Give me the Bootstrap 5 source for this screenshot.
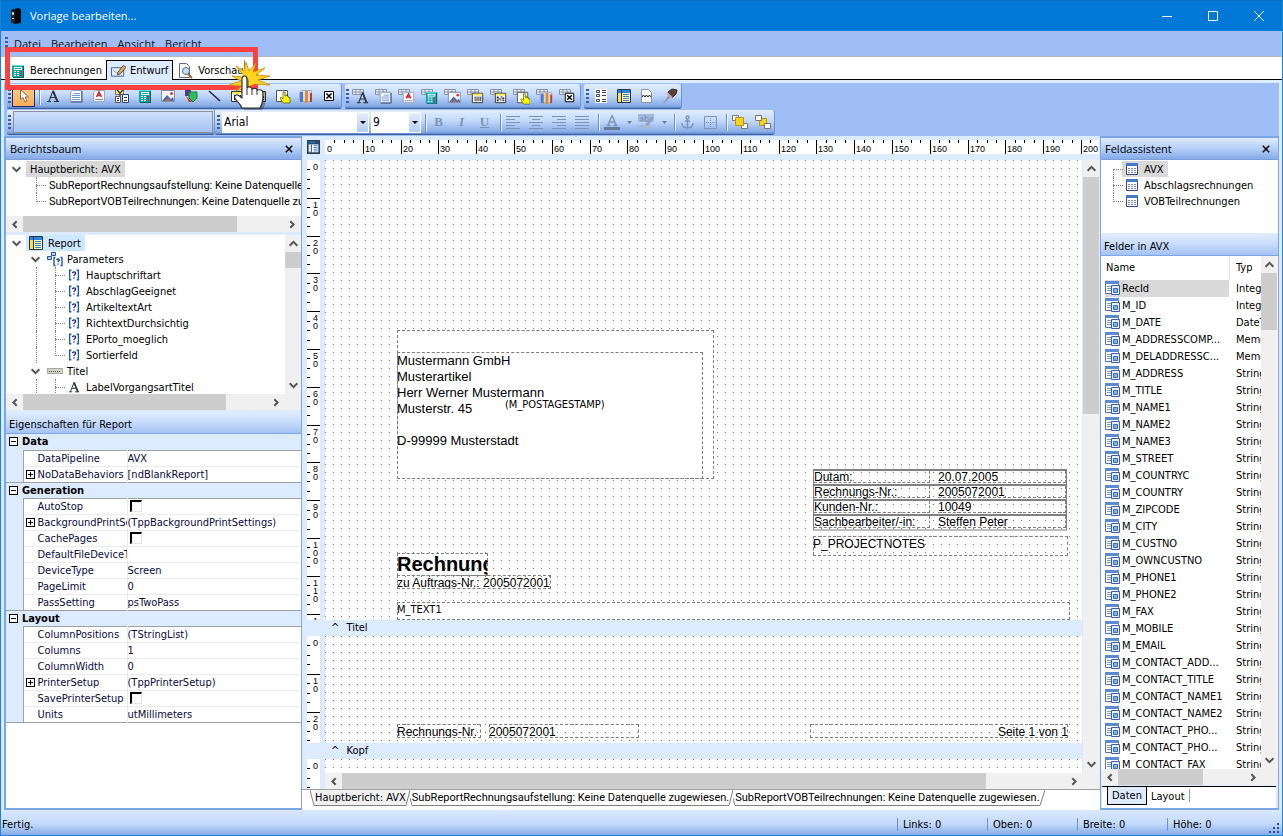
<!DOCTYPE html>
<html lang="de">
<head>
<meta charset="utf-8">
<meta name="viewport" content="width=device-width, initial-scale=1">
<title>Vorlage bearbeiten...</title>
<link href="https://cdn.jsdelivr.net/npm/bootstrap@5.3.0/dist/css/bootstrap.min.css" rel="stylesheet">
<style>
:root{--pale:#ddebff;--mid:#9ebef5;--edge:#7ca6e8;--ui:"DejaVu Sans Condensed","DejaVu Sans",sans-serif;--seg:"Open Sans","Noto Sans",sans-serif;--doc:"Liberation Sans",Arial,sans-serif;--long:Roboto,"DejaVu Sans Condensed",sans-serif}
body{font:11px/16px var(--ui);color:#000;background:var(--pale)}
button{font:inherit;color:inherit;background:none;border:0;padding:0}
svg{display:block;flex:none}
.nw{white-space:nowrap}
.window{border:1px solid #1883d7;border-top-color:#0a6fc0}
.titlebar{background:#0078d7;color:#fff;height:30px;font:11px/16px var(--seg);padding-left:9px}
.titlebar button{width:46px;height:30px;display:flex;align-items:center;justify-content:center}
.menubar{background:var(--mid);height:25px;font:11px/24px var(--seg);gap:10px}
.menubar a{color:#111;text-decoration:none}
.menubar .grip{margin-right:-4px}
.grip{width:3px;height:14px;background:repeating-linear-gradient(#3a5fa8 0 2px,transparent 2px 4px);flex:none}
.modes{background:#fff;border-top:1px solid #b8b8b8;border-bottom:1px solid #000;height:24px;position:relative;padding-top:3px;padding-left:9px}
.modes button{height:20px;line-height:20px;display:flex;align-items:center;gap:4px;position:relative;z-index:1;padding-top:2px}
.modes button.on{background:var(--pale);border:1px solid #000;border-bottom:0;padding-top:1px}
.modes .stop{width:1px;height:13px;background:#888}
.callout{position:absolute;left:4px;top:-10px;width:253px;height:43px;border:5px solid #ff4141;z-index:5;pointer-events:none}
.pointer{position:absolute;left:223px;top:2px;z-index:6;pointer-events:none}
.tools{background:var(--mid);margin:3px 3px 0;padding:1px 2px 1px 3px}
.bars+.bars{margin-top:1px}
.strip{display:flex;align-items:center;height:25px;background:linear-gradient(#e1edff,#c3d9fb 45%,#86abe6 92%,#5c82c4);border-radius:2px 3px 3px 2px;border-bottom:1px solid #40639f;border-right:1px solid #6f95d6;padding-left:1px;margin-right:3px}
.strip.roomy{padding-right:1px}
.strip.wide{padding-left:2px}
.strip .tb{width:23px;height:22px;display:flex;align-items:center;justify-content:center;flex:none}
.strip .tb.on{background:linear-gradient(#ffce8a,#ffad55);border:1px solid #1a2a80;margin-left:1px}
.strip .tb.dd{width:12px}
.strip .sep{width:2px;height:17px;background:linear-gradient(90deg,#6a8ccb 1px,#f1f6ff 1px);margin-left:4px}
.dim{color:#7d93b8}
.fs{font:700 13px/16px "Liberation Serif",serif}
.strip select{appearance:none;border:0;border-radius:0;height:21px;padding:0 14px 0 2px;font:12px/20px var(--ui);color:#000;background:#fff}
.pick{position:relative;display:flex;margin-left:2px}
.pick::after{content:"";position:absolute;right:1px;top:1px;bottom:1px;width:11px;background:linear-gradient(#e3eeff,#b4cdf5);pointer-events:none}
.pick::before{content:"";position:absolute;z-index:1;right:3px;top:9px;border:3px solid transparent;border-top-color:#000;border-bottom:0;pointer-events:none}
.fam{width:147px}.siz{width:50px}
.inset{background:linear-gradient(#cfe0fb,#a3c2f2);border:1px solid #8a8f98;width:200px;height:22px;margin:0 1px 0 2px}
.work-area{min-height:0;padding:0 3px}
.side{border:2px solid var(--edge);border-right-width:1px;min-height:0}
.side.left{width:298px}.side.right{width:179px;border-left-width:1px}
.cap{font:11px/21px var(--seg);height:22px;padding:0 4px;background:linear-gradient(#dfecff,#b5cff8 50%,#86abe8);border-bottom:1px solid #7b9fdb}
.subcap{height:20px;line-height:21px;padding:0 3px;background:linear-gradient(#dbe9ff,#c6dbfb 45%,#a4c2f3);border-bottom:1px solid var(--edge);flex:none}
.pane{background:#fff}
.gapline{height:3px;background:var(--pale);flex:none}
.gapline.deep{height:4px}
.t1{height:56px;flex:none;padding-top:1px}.t2{height:159px;flex:none;overflow:hidden}.t3{height:73px;flex:none;padding-top:1px}
.t1 .sub{font-family:var(--long)}
.row-t{display:flex;height:16px;line-height:17px;white-space:nowrap;padding-left:1px}
.right .row-t{padding-left:2px}
.row-t i{width:19px;flex:none;display:flex;align-items:center;justify-content:center;position:relative}
.row-t i.v::before,.row-t i.t::before,.row-t i.l::before{content:"";position:absolute;left:10px;top:0;bottom:0;border-left:1px dotted #808080}
.row-t i.l::before{bottom:7px}
.row-t i.first::before{top:8px}
.row-t i.t::after,.row-t i.l::after{content:"";position:absolute;left:10px;right:-1px;top:8px;border-top:1px dotted #808080}
.row-t .ic{width:22px;display:flex;align-items:center;justify-content:center;padding-right:2px;flex:none}
.pick-a{background:#d9d9d9}.pick-b{background:#cce8ff}
.sb{background:#f0f0f0;display:flex;flex:none}
.sb>button{width:17px;height:16px;display:flex;align-items:center;justify-content:center;flex:none}
.sb .trk{flex:1 1 0;min-width:0;min-height:0}
.sb .thumb{background:#cdcdcd;height:100%}
.sb.up{flex-direction:column;width:16px}
.sb.up>button{width:16px;height:17px}
.sb.up .thumb{width:100%}
.props{width:100%;table-layout:fixed;border-collapse:collapse;border-bottom:1px solid #a0a0a0}
.props td,.props th{height:16px;line-height:15px;padding:0;overflow:hidden;white-space:nowrap;font-weight:400}
.props .grp th{background:var(--pale);font-weight:700}
.props .gut{background:var(--pale);border-right:1px solid #a0a0a0}
.props tr:not(.grp) td:last-child,.props tr:not(.grp) th{border-top:1px solid #ececec}
.props tr:not(.grp) th{border-right:1px solid #ececec;color:#0a0a3c}
.props .grp+tr td:last-child,.props .grp+tr th{border-top-color:#a0a0a0}
.props .grp{border-top:1px solid #a0a0a0}
.props tr.grp:first-child{border-top:0}
.props td:last-child{color:#0a0a3c}
.cellx{display:flex;align-items:center}
.pm{width:9px;height:9px;border:1px solid #000;background:linear-gradient(#000,#000) center/5px 1px no-repeat #fff;flex:none;margin:0 4px 0 3px}
.pm.plus{background:linear-gradient(#000,#000) center/5px 1px no-repeat,linear-gradient(#000,#000) center/1px 5px no-repeat,#fff;margin:0 3px 0 2px}
.nopm{width:9px;margin:0 3px 0 2px;flex:none}
.props input{appearance:none;width:12px;height:12px;border:1px solid #e4e4e4;border-top:2px solid #000;border-left:2px solid #000;background:#fff;display:block;margin:0 0 0 2px}
.rulers{margin:4px 1px 6px 5px;height:14px}
.corner{margin-right:5px}
.sheet{margin:0 1px 0 5px;min-height:0}
.vcol{margin-right:5px;width:13px;flex:none}
.bands{margin-right:1px;min-width:0}
.hruler{height:14px;background:#fff;overflow:hidden;flex:1 1 0}
.vrule{width:13px;background:#fff;overflow:hidden}
.vrule svg,.hruler svg{font:9px var(--doc)}
.b1{flex:1 1 0;min-height:0}.b2{height:107px;flex:none}.b3{height:14px;flex:none}.b3r{height:30px;flex:none}.bar{height:16px;flex:none;padding-left:6px}
.dots{background:linear-gradient(90deg,transparent 1px,#fff 1px) 0 0/8px 8px,linear-gradient(#7a7a7a 1px,#fff 1px) 0 0/8px 8px;position:relative;overflow:hidden}
.obj{position:absolute;outline:1px dashed #7e7e7e;outline-offset:-1px;font:12px/16px var(--doc);white-space:nowrap;overflow:hidden}
.obj.big{font:13px/16px var(--doc);padding-top:1px}
.obj.bare{outline:0}
.obj.ui{font:11px/16px var(--ui)}
.obj.head{font:700 20px/23px var(--doc)}
.rec{position:absolute;font:12px/14px var(--doc);width:254px;border:1px solid #808080;border-top:0;border-bottom:2px solid #c0c0c0}
.rec div{display:flex;height:15px;border-top:2px solid #808080}
.rec span{border-bottom:1px dashed #808080;border-right:1px dashed #808080;height:12px;line-height:12px;white-space:nowrap}
.rec span:first-child{width:116px;margin-right:8px}
.rec span:last-child{flex:1}
.sheets{background:#fff;border-top:1px solid #a0a0a0;height:21px;padding-left:8px;font-family:var(--long)}
.sheets button{display:flex;height:16px;position:relative;white-space:nowrap}
.sheets button span{border-bottom:1px solid #808080;line-height:16px;height:16px}
.sheets button.on span{background:#f0f0f0;font-family:var(--ui)}
.list{flex:1 1 0;min-height:0;padding-right:1px}
.fields{width:100%;table-layout:fixed;border-collapse:collapse;white-space:nowrap}
.fields th,.fields td{padding:0;font-weight:400;overflow:hidden}
.fields td{height:17px;line-height:17px}
.fields th{height:24px;vertical-align:middle}
.nm{border-right:1px solid #e0e0e0;height:24px;line-height:24px;margin-right:6px;padding-left:1px}
.fname{display:flex;margin-right:7px;gap:1px}
.lay{border-top:1px solid #000;height:22px;margin:1px 2px 0 1px;padding-left:5px}
.lay button{height:18px;padding:0 4px;line-height:17px}
.lay .on{border:1px solid #000;border-top:0;background:var(--pale)}
.lay .stop2{width:1px;height:13px;background:#999;margin:2px 0}
.status{height:25px;background:linear-gradient(#d9e8ff,#c4dafb 55%,#86abe6);line-height:30px;padding-left:1px;position:relative}
.status .it{width:90px;display:flex;align-items:center;padding-top:4px}
.status .it::before{content:"";width:1px;height:13px;background:#6d93d4;margin-right:5px}
.status .last{width:115px}
.status .size{position:absolute;right:2px;bottom:1px}
</style>
</head>
<body>
<svg width="0" height="0" class="position-absolute" aria-hidden="true">
<defs>
<symbol id="calc" viewBox="0 0 16 16"><path d="M2 2h11l1 1v11H2z" fill="#12a5a5"/><path d="M2 2h11v1H2z" fill="#5fe0e0"/><path d="M4 4h8v3H4z" fill="#fff"/><path d="M5 5h6v1H5z" fill="#0aa"/><path d="M4 8h2v1H4zm3 0h2v1H7zm-3 2h2v1H4zm3 0h2v1H7zm-3 2h2v1H4zm3 0h2v1H7z" fill="#fff"/><path d="M10 8h2v1h-2zm0 2h2v1h-2zm0 2h2v1h-2z" fill="#e02020"/><path d="M14 3v12H3v-1h10V3z" fill="#066"/></symbol>
<symbol id="page" viewBox="0 0 16 16"><path d="M4.500 2.500h9v11h-11v-9z" fill="#fff" stroke="#8aa0c8"/><path d="M6 5.500h6M4 7.500h8M4 9.500h8M4 11.500h8" stroke="#6a9ad8"/><path d="M14 3v11H3" fill="none" stroke="#46507a"/></symbol>
<symbol id="rich" viewBox="0 0 16 16"><path d="M4.500 2.500h9v11h-11v-9z" fill="#fff" stroke="#9aa6bc"/><path d="M5.500 9L8 4l2.500 5M6.500 7.500h3" fill="none" stroke="#d81c28" stroke-width="1.500"/><path d="M4 11.500h8" stroke="#888"/></symbol>
<symbol id="lett" viewBox="0 0 16 16"><path d="M8 3L4 13M7.600 3L12 13M5.200 9.500h5.500M2 13.500h4M9 13.500h5" fill="none" stroke="#30343e" stroke-width="1.100"/><path d="M7.500 2.500L11.500 13.500h2L9 2.500z" fill="#30343e"/></symbol>
<symbol id="sys" viewBox="0 0 16 16"><path d="M1.500 1.500h8v5h-8z" fill="#ffe680" stroke="#776"/><path d="M3 2l3 3 3-3M6 4v4" fill="none" stroke="#333" stroke-width="1.300"/><path d="M1.500 8.500h5v6h-5z" fill="#fff" stroke="#555"/><path d="M8.500 6.500h6v8h-6z" fill="#fff" stroke="#2a3a80"/><path d="M10 9.500h3M10 12.500h3M3 10.500h2M3 12.500h2" stroke="#333"/></symbol>
<symbol id="pic" viewBox="0 0 16 16"><path d="M1.500 2.500h13v11h-13z" fill="#f4f7ff" stroke="#8792a8"/><path d="M2 13l5-6 4 4 2-2 1 4z" fill="#4a6cb0"/><path d="M5 13l3-3 3 3z" fill="#c06a50"/><circle cx="11.500" cy="5.500" r="1.500" fill="#e33"/></symbol>
<symbol id="shp" viewBox="0 0 16 16"><path d="M2 2h6v6H2z" fill="#553a90"/><path d="M6 4h8v6l-4 4-4-4z" fill="#35bb5c" stroke="#1a7a38"/><path d="M3 8l6 6H6z" fill="#d22"/></symbol>
<symbol id="lin" viewBox="0 0 16 16"><path d="M3 3l11 10" stroke="#223" stroke-width="1.500"/></symbol>
<symbol id="bar" viewBox="0 0 16 16"><path d="M2.500 3.500h11v10h-11z" fill="#fff" stroke="#333"/><path d="M3 4h10v2H3z" fill="#ffe94d"/><path d="M5.500 7v5M7.500 7v5M9.500 7v5M11.500 7v5" stroke="#222"/></symbol>
<symbol id="mat" viewBox="0 0 16 16"><path d="M2.500 3.500h11v10h-11z" fill="#fff" stroke="#333"/><path d="M3 4h10v2H3z" fill="#ffe94d"/><path d="M4 7h2v2H4zm4 0h2v1H8zm2 1h2v2h-2zM6 9h3v1H6zm-2 1h2v2H4zm4 1h1v1H8zm2 0h2v1h-2z" fill="#222"/></symbol>
<symbol id="hnd" viewBox="0 0 16 16"><path d="M1.500 2.500h11v11h-11z" fill="#fff" stroke="#555"/><path d="M8 15l-3-5 1-1 2 2V4h2v4h1V7h1v1h1v1h1v1h1v5z" fill="#ff0" stroke="#332" stroke-width=".6"/></symbol>
<symbol id="cht" viewBox="0 0 16 16"><path d="M1.500 4.500l2-2h10v9l-2 2h-10z" fill="#d4dcea" stroke="#a8b0c0"/><path d="M2 4h3v10H2z" fill="#4a7ad0"/><path d="M7 3h3v12H7z" fill="#e88a28"/><path d="M12 5h2v9h-2z" fill="#b04030"/></symbol>
<symbol id="xbx" viewBox="0 0 16 16"><path d="M3.500 3.500h9v9h-9z" fill="#fff" stroke="#000"/><path d="M5.500 5.500l5 5m0-5l-5 5" stroke="#000" stroke-width="1.500"/></symbol>
<symbol id="dbt" viewBox="0 0 17 17"><path d="M.5 1.500h11v5H.5zM.5 4h11M4 1.500v5M8 1.500v5" fill="#eef3fb" stroke="#8492aa"/></symbol>
<symbol id="rep" viewBox="0 0 16 16"><path d="M1.500 1.500h13v13h-13z" fill="#fffbc0" stroke="#26344a"/><path d="M2 2h12v3H2z" fill="#2a84e0"/><path d="M2 5h3v9H2z" fill="#ffe23c"/><path d="M5.500 2v12" stroke="#26344a"/><path d="M7 6.500h6M7 8.500h6M7 10.500h6M7 12.500h6" stroke="#3a80cc"/></symbol>
<symbol id="repb" viewBox="0 0 16 16"><path d="M1 1h14v14H1z" fill="#fff" stroke="#2c3f58" stroke-width="2"/><path d="M1 1h14v4H1z" fill="#2c4a70"/><path d="M2 2h8v1H2z" fill="#1c8ae0"/><path d="M5.500 5v10" stroke="#2c3f58"/><path d="M8 6.500h5M8 8.500h5M8 10.500h5M8 12.500h5M3 7h1M3 10h1M3 13h1" stroke="#1c6ad0"/></symbol>
<symbol id="prm" viewBox="0 0 16 16"><path d="M5 2.500H3v11h2M11 2.500h2v11h-2" fill="none" stroke="#1b5fb4" stroke-width="1.600"/><path d="M6.300 6c0-2 3.500-2 3.500 0 0 1.500-1.800 1.300-1.800 3M8 10.500v1.500" fill="none" stroke="#1a1a70" stroke-width="1.400"/></symbol>
<symbol id="prms" viewBox="0 0 16 16"><path d="M.5 5.500h4v3h-4zM4.500 1.500h4v3h-4z" fill="#b8d0f0" stroke="#2a50a0"/><path d="M8.500 6.500H7v8h1.500M13.500 6.500H15v8h-1.500" fill="none" stroke="#1b5fb4" stroke-width="1.400"/><path d="M9.800 9c0-1.500 2.500-1.500 2.500 0 0 1-1.300 1-1.300 2M11 12.500v1" fill="none" stroke="#1a1a70" stroke-width="1.200"/></symbol>
<symbol id="bnd" viewBox="0 0 16 16"><path d="M.5 5.500h15v5H.5z" fill="#cfd3c8" stroke="#a8aca0"/><path d="M2 8.500h12" stroke="#555" stroke-dasharray="1 1"/></symbol>
<symbol id="tbl" viewBox="0 0 14 14"><path d="M1.500 1.500h11v11h-11z" fill="#fff" stroke="#34478c"/><path d="M1 1h12v3H1z" fill="#4478c8"/><path d="M3 6.500h8M3 8.500h8M3 10.500h8" stroke="#7c88a8" stroke-dasharray="2 1"/></symbol>
<symbol id="fld" viewBox="0 0 16 16"><path d="M.5 1.500h13v12H.5z" fill="#fff" stroke="#5a70ac"/><path d="M0 1h14v3H0z" fill="#5b8ad2"/><path d="M2 6.500h4M2 8.500h4M2 10.500h4" stroke="#7c9cc8"/><path d="M6.500 5.500h8v9h-8z" fill="#e4efff" stroke="#3f5fa4"/><path d="M8.500 8.500h4v4h-4z" fill="#7fb0ec" stroke="#3a70c4"/></symbol>
<symbol id="cU" viewBox="0 0 10 10"><path d="M1.500 7L5 3.500 8.500 7" fill="none" stroke="#555" stroke-width="1.800"/></symbol>
<symbol id="cD" viewBox="0 0 10 10"><path d="M1.500 3L5 6.500 8.500 3" fill="none" stroke="#555" stroke-width="1.800"/></symbol>
<symbol id="cL" viewBox="0 0 10 10"><path d="M7 2L4 5l3 3" fill="none" stroke="#555" stroke-width="1.800"/></symbol>
<symbol id="cR" viewBox="0 0 10 10"><path d="M3 2l3 3-3 3" fill="none" stroke="#555" stroke-width="1.800"/></symbol>
<symbol id="xx" viewBox="0 0 10 10"><path d="M1 1l8 8M9 1L1 9" stroke="#000" stroke-width="1.800"/></symbol>
<symbol id="alL" viewBox="0 0 15 15"><path d="M0 1.500h14M0 4.500h9M0 7.500h14M0 10.500h9M0 13.500h14" stroke="currentColor"/></symbol>
<symbol id="alC" viewBox="0 0 15 15"><path d="M0 1.500h14M3 4.500h8M0 7.500h14M3 10.500h8M0 13.500h14" stroke="currentColor"/></symbol>
<symbol id="alR" viewBox="0 0 15 15"><path d="M0 1.500h14M5 4.500h9M0 7.500h14M5 10.500h9M0 13.500h14" stroke="currentColor"/></symbol>
<symbol id="alJ" viewBox="0 0 15 15"><path d="M0 1.500h14M0 4.500h14M0 7.500h14M0 10.500h14M0 13.500h14" stroke="currentColor"/></symbol>
</defs></svg>

<div class="window d-flex flex-column vh-100 overflow-hidden">
  <header class="titlebar d-flex align-items-center flex-shrink-0">
    <svg width="12" height="16" viewBox="0 0 12 16"><path d="M1 2l7-2 3 1v14l-6 1-4-2z" fill="#05070a"/><path d="M1 2l4 1v13l-4-2z" fill="#222"/><path d="M2 4l2 .5V7l-2-.5zM2 10h2v1H2z" fill="#ddd"/></svg>
    <span class="ms-2 me-auto nw">Vorlage bearbeiten...</span>
    <button aria-label="Minimieren"><svg width="10" height="10"><path d="M0 5.500h10" stroke="#fff"/></svg></button>
    <button aria-label="Maximieren"><svg width="10" height="10"><path d="M.5.500h9v9h-9z" fill="none" stroke="#fff"/></svg></button>
    <button aria-label="Schließen"><svg width="10" height="10"><path d="M0 0l10 10M10 0L0 10" stroke="#fff"/></svg></button>
  </header>
  <nav class="menubar d-flex align-items-center flex-shrink-0 ps-1">
    <span class="grip"></span>
    <a href="#">Datei</a><a href="#">Bearbeiten</a><a href="#">Ansicht</a><a href="#">Bericht</a>
  </nav>
  <div class="modes d-flex flex-shrink-0">
    <button class="pe-1"><svg width="16" height="16"><use href="#calc"/></svg>Berechnungen</button>
    <button class="on ps-1 pe-1"><svg width="15" height="14" viewBox="0 0 16 14"><path d="M.5 3.500h13v9H.5z" fill="#e8eefa" stroke="#3a5aa0"/><path d="M2 6l5 4 6-5" fill="none" stroke="#7fa0d8"/><path d="M7 9L13 1l3 2-6 7-3 1z" fill="#e8b040" stroke="#445"/></svg>Entwurf</button>
    <button class="ps-1"><svg width="17" height="16" viewBox="0 0 17 16"><path d="M2.500.500h7l3 3v11h-10z" fill="#fff" stroke="#5a6a9a"/><circle cx="9" cy="8" r="3.500" fill="#bfe0f8" stroke="#667"/><path d="M11 11l4 4" stroke="#a06a30" stroke-width="2"/></svg>Vorschau</button>
    <span class="stop"></span>
    <div class="callout"></div>
    <svg class="pointer" width="50" height="54" viewBox="0 0 50 54">
      <path d="M21 18L12 7l8 5 2-9 3 9 7-8-3 9 12-4-9 7 14 1-12 4 12 5-15-1-10 4-9 3 6-5-13-1 12-4-9-5z" fill="#ffd21f" stroke="#c98a00" stroke-width=".8"/>
      <path d="M20 51c-2-6-11-11-6-14 3-1 5 3 6 3V22c0-4 5-4 5 0v8c1-2 5-1 5 1 2-1 5-1 5 1 5-1 7 1 7 4 0 8-1 11-4 15z" fill="#222" opacity=".35"/>
      <path d="M18 49c-2-6-11-10-6-13 3-1 5 3 6 3V20c0-4 5-4 5 0v9c1-2 5-1 5 1 2-1 5-1 5 1 5-1 6 1 6 4 0 8-1 10-3 14z" fill="#fff" stroke="#333" stroke-width="1.200"/>
      <path d="M23 29v7M28 30v6M33 31v5" stroke="#333"/>
    </svg>
  </div>

  <div class="tools flex-shrink-0">
    <div class="d-flex bars" id="bars1"></div>
    <div class="d-flex bars">
      <div class="strip me-0"><span class="grip"></span><div class="inset"></div></div>
      <div class="strip wide"><span class="grip"></span>
        <span class="pick"><select class="fam" aria-label="Schriftart"><option>Arial</option></select></span>
        <span class="pick"><select class="siz" aria-label="Schriftgrad"><option>9</option></select></span>
        <span class="sep"></span>
        <button class="tb dim" aria-label="Fett"><b class="fs">B</b></button>
        <button class="tb dim" aria-label="Kursiv"><i class="fs fst-italic">I</i></button>
        <button class="tb dim" aria-label="Unterstrichen"><u class="fs">U</u></button>
        <span class="sep"></span>
        <button class="tb dim" aria-label="Links"><svg width="15" height="15"><use href="#alL"/></svg></button>
        <button class="tb dim" aria-label="Zentriert"><svg width="15" height="15"><use href="#alC"/></svg></button>
        <button class="tb dim" aria-label="Rechts"><svg width="15" height="15"><use href="#alR"/></svg></button>
        <button class="tb dim" aria-label="Blocksatz"><svg width="15" height="15"><use href="#alJ"/></svg></button>
        <span class="sep"></span>
        <button class="tb dim" aria-label="Schriftfarbe"><svg width="16" height="17" viewBox="0 0 16 17"><path d="M8 1.500L4 11M8 1l4 10M5.500 8h5M2.500 11.500h4M9.500 11.500h4" fill="none" stroke="currentColor" stroke-width="1.500"/><path d="M0 13h16v3H0z" fill="#66789c"/></svg></button>
        <button class="tb dim dd" aria-label="Farbe wählen"><svg width="5" height="3"><path d="M0 0h5L2.500 3z" fill="#6a7f9f"/></svg></button>
        <button class="tb dim" aria-label="Hervorheben"><svg width="17" height="16" viewBox="0 0 17 16"><path d="M0 0h16v8H0z" fill="#a3b8dc"/><path d="M2 6a1.500 1.500 0 1 0 0-1M4.500 3v4M7 1v6a2 2 0 1 0 0-3" fill="none" stroke="currentColor"/><path d="M7 11l7-9 2 2-6 8z" fill="#8da2c6"/><path d="M0 11h13v3H0z" fill="#a4b8da"/></svg></button>
        <button class="tb dim dd" aria-label="Farbe wählen"><svg width="5" height="3"><path d="M0 0h5L2.500 3z" fill="#6a7f9f"/></svg></button>
        <span class="sep"></span>
        <button class="tb dim" aria-label="Anker"><svg width="13" height="14" viewBox="0 0 13 14" fill="none" stroke="currentColor" stroke-width="1.400"><circle cx="6.500" cy="2.500" r="1.500"/><path d="M6.500 4v9M4 6h5M1 8c0 3 2 5 5.500 5S12 11 12 8"/></svg></button>
        <button class="tb dim" aria-label="Rahmen"><svg width="13" height="13" viewBox="0 0 13 13"><path d="M.5.500h12v12H.5z" fill="none" stroke="currentColor"/><path d="M6.500 2v9M2 6.500h9" stroke="currentColor" stroke-dasharray="1 1"/></svg></button>
        <span class="sep"></span>
        <button class="tb" aria-label="Nach vorne"><svg width="16" height="14" viewBox="0 0 16 14"><path d="M.5.500h6v5h-6z" fill="#fff" stroke="#777"/><path d="M9.500 8.500h6v5h-6z" fill="#fff" stroke="#777"/><path d="M3.500 2.500h8v8h-8z" fill="#f7d417" stroke="#b89420"/></svg></button>
        <button class="tb" aria-label="Nach hinten"><svg width="16" height="14" viewBox="0 0 16 14"><path d="M4.500 3.500h7v7h-7z" fill="#f7d417" stroke="#b89420"/><path d="M.5.500h6v5h-6zM9.500 8.500h6v5h-6z" fill="#fff" stroke="#777"/></svg></button>
      </div>
    </div>
  </div>

  <main class="work-area d-flex flex-grow-1">
    <!-- report tree and property grid -->
    <aside class="side left d-flex flex-column">
      <div class="cap d-flex align-items-center"><span class="me-auto">Berichtsbaum</span><button aria-label="Schließen" class="me-1"><svg width="8" height="8"><use href="#xx"/></svg></button></div>
      <div class="pane t1 overflow-hidden">
        <div class="row-t"><i><svg width="11" height="11"><use href="#cD"/></svg></i><span class="pick-a px-1">Hauptbericht: AVX</span></div>
        <div class="row-t sub"><i></i><i class="t"></i><span class="ps-1">SubReportRechnungsaufstellung: Keine Datenquelle zugewiesen.</span></div>
        <div class="row-t sub"><i></i><i class="l"></i><span class="ps-1">SubReportVOBTeilrechnungen: Keine Datenquelle zugewiesen.</span></div>
      </div>
      <div class="sb"><button aria-label="links"><svg width="11" height="11"><use href="#cL"/></svg></button><div class="trk"><div class="thumb" style="width:82%"></div></div><button aria-label="rechts"><svg width="11" height="11"><use href="#cR"/></svg></button></div>
      <div class="gapline"></div>
      <div class="d-flex t2">
        <div class="pane flex-grow-1 overflow-hidden" id="tree2"></div>
        <div class="sb up"><button aria-label="auf"><svg width="11" height="11"><use href="#cU"/></svg></button><div class="trk"><div class="thumb" style="height:13%"></div></div><button aria-label="ab"><svg width="11" height="11"><use href="#cD"/></svg></button></div>
      </div>
      <div class="sb pe-3"><button aria-label="links"><svg width="11" height="11"><use href="#cL"/></svg></button><div class="trk"><div class="thumb" style="width:83%"></div></div><button aria-label="rechts"><svg width="11" height="11"><use href="#cR"/></svg></button></div>
      <div class="gapline deep"></div>
      <div class="subcap">Eigenschaften für Report</div>
      <div class="pane flex-grow-1 overflow-hidden"><table class="props"><colgroup><col style="width:17px"><col style="width:104px"><col></colgroup><tbody id="props"></tbody></table></div>
    </aside>

    <!-- report designer -->
    <section class="flex-grow-1 d-flex flex-column" style="min-width:0">
      <div class="d-flex rulers"><svg width="13" height="14" class="corner" viewBox="0 0 16 16" preserveAspectRatio="none"><use href="#repb"/></svg><div class="hruler" id="hr"></div></div>
      <div class="d-flex flex-grow-1 sheet">
        <div class="d-flex flex-column vcol">
          <div class="vrule b1" data-len="1600"></div><div class="bar"></div><div class="vrule b2" data-len="107"></div><div class="bar"></div><div class="vrule b3r" data-len="30"></div>
        </div>
        <div class="d-flex flex-column flex-grow-1" style="min-width:0">
          <div class="d-flex flex-grow-1" style="min-height:0">
            <div class="d-flex flex-column flex-grow-1 bands">
              <div class="dots b1">
                <div class="obj bg-white" style="left:72px;top:170px;width:317px;height:149px"></div>
                <div class="obj big" style="left:72px;top:192px;width:306px;height:127px">Mustermann GmbH<br>Musterartikel<br>Herr Werner Mustermann<br>Musterstr. 45<br><br>D-99999 Musterstadt</div>
                <div class="obj bare ui" style="left:180px;top:237px">(M_POSTAGESTAMP)</div>
                <div class="rec" style="left:488px;top:309px">
                  <div><span>Dutam:</span><span>20.07.2005</span></div><div><span>Rechnungs-Nr.:</span><span>2005072001</span></div><div><span>Kunden-Nr.:</span><span>10049</span></div><div><span>Sachbearbeiter/-in:</span><span>Steffen Peter</span></div>
                </div>
                <div class="obj" style="left:488px;top:376px;width:255px;height:20px">P_PROJECTNOTES</div>
                <div class="obj head" style="left:72px;top:393px;width:91px;height:23px">Rechnung</div>
                <div class="obj" style="left:72px;top:415px;width:154px;height:14px">zu Auftrags-Nr.: 2005072001</div>
                <div class="obj ui bg-white" style="left:72px;top:442px;width:673px;height:18px">M_TEXT1</div>
              </div>
              <div class="bar">^ <span class="ms-1">Titel</span></div>
              <div class="dots b2">
                <div class="obj" style="left:72px;top:88px;width:84px;height:14px">Rechnungs-Nr.</div>
                <div class="obj" style="left:164px;top:88px;width:150px;height:14px">2005072001</div>
                <div class="obj text-end" style="left:485px;top:88px;width:258px;height:14px">Seite 1 von 1</div>
              </div>
              <div class="bar">^ <span class="ms-1">Kopf</span></div>
              <div class="dots b3"></div>
            </div>
            <div class="sb up"><button aria-label="auf"><svg width="11" height="11"><use href="#cU"/></svg></button><div class="trk"><div class="thumb" style="height:41%"></div></div><button aria-label="ab"><svg width="11" height="11"><use href="#cD"/></svg></button></div>
          </div>
          <div class="sb pe-3"><button aria-label="links"><svg width="11" height="11"><use href="#cL"/></svg></button><div class="trk"><div class="thumb" style="width:89%"></div></div><button aria-label="rechts"><svg width="11" height="11"><use href="#cR"/></svg></button></div>
        </div>
      </div>
      <div class="sheets d-flex overflow-hidden">
        <button class="on"><svg width="5" height="16"><path d="M0 0l4 15.500h1" fill="none" stroke="#808080"/></svg><span>Hauptbericht: AVX</span><svg width="4" height="16"><path d="M0 15.500L4 0" fill="none" stroke="#808080"/></svg></button>
        <button><svg width="2" height="16"><path d="M0 8l2 7.500" fill="none" stroke="#808080"/></svg><span>SubReportRechnungsaufstellung: Keine Datenquelle zugewiesen.</span><svg width="4" height="16"><path d="M0 15.500L4 0" fill="none" stroke="#808080"/></svg></button>
        <button><svg width="2" height="16"><path d="M0 8l2 7.500" fill="none" stroke="#808080"/></svg><span>SubReportVOBTeilrechnungen: Keine Datenquelle zugewiesen.</span><svg width="5" height="16"><path d="M0 15.500L5 0" fill="none" stroke="#808080"/></svg></button>
      </div>
    </section>

    <!-- data tables and fields -->
    <aside class="side right d-flex flex-column">
      <div class="cap d-flex align-items-center"><span class="me-auto">Feldassistent</span><button aria-label="Schließen" class="me-1"><svg width="8" height="8"><use href="#xx"/></svg></button></div>
      <div class="pane t3">
        <div class="row-t"><i class="t first"></i><span class="pick-a d-flex"><span class="ic"><svg width="14" height="14"><use href="#tbl"/></svg></span><span class="pe-1">AVX</span></span></div>
        <div class="row-t"><i class="t"></i><span class="ic"><svg width="14" height="14"><use href="#tbl"/></svg></span><span>Abschlagsrechnungen</span></div>
        <div class="row-t"><i class="l"></i><span class="ic"><svg width="14" height="14"><use href="#tbl"/></svg></span><span>VOBTeilrechnungen</span></div>
      </div>
      <div class="gapline"></div>
      <div class="subcap">Felder in AVX</div>
      <div class="d-flex list pane">
        <div class="flex-grow-1 overflow-hidden ps-1" style="min-width:0"><table class="fields"><colgroup><col style="width:131px"><col></colgroup><thead><tr><th><div class="nm">Name</div></th><th>Typ</th></tr></thead><tbody id="fields"></tbody></table></div>
        <div class="sb up"><button aria-label="auf"><svg width="11" height="11"><use href="#cU"/></svg></button><div class="trk"><div class="thumb" style="height:12%"></div></div><button aria-label="ab"><svg width="11" height="11"><use href="#cD"/></svg></button></div>
      </div>
      <div class="sb pe-3"><button aria-label="links"><svg width="11" height="11"><use href="#cL"/></svg></button><div class="trk"><div class="thumb" style="width:67%"></div></div><button aria-label="rechts"><svg width="11" height="11"><use href="#cR"/></svg></button></div>
      <div class="lay d-flex pane"><button class="on">Daten</button><button>Layout</button><span class="stop2"></span></div>
    </aside>
  </main>

  <footer class="status d-flex flex-shrink-0"><span class="me-auto">Fertig.</span><span class="it">Links: 0</span><span class="it">Oben: 0</span><span class="it">Breite: 0</span><span class="it last">Höhe: 0</span>
    <svg width="12" height="12" class="size"><path d="M9 1h2v2H9zM5 5h2v2H5zm4 0h2v2H9zM1 9h2v2H1zm4 0h2v2H5zm4 0h2v2H9z" fill="#2c4f96"/></svg></footer>
</div>
<script src="https://cdn.jsdelivr.net/npm/bootstrap@5.3.0/dist/js/bootstrap.bundle.min.js"></script>
<script>
const ic=(n,s=16)=>`<svg width="${s}" height="${s}"><use href="#${n}"/></svg>`;
const $=id=>document.getElementById(id);
// first toolbar row
const db=n=>`<button class="tb" aria-label="DB ${n}"><svg width="17" height="17" viewBox="0 0 17 17"><use href="#dbt" width="17" height="17"/><use href="#${n}" x="3" y="2" width="15" height="15"/></svg></button>`;
const tb=n=>`<button class="tb" aria-label="${n}">${ic(n)}</button>`;
$('bars1').innerHTML=
`<div class="strip roomy"><span class="grip"></span><button class="tb on" aria-label="Auswahl"><svg width="12" height="16" viewBox="0 0 12 16"><path d="M2.500 1.500v10l2.500-2 2 4.500 2-1-2-4h3.500z" fill="#fff" stroke="#8a6a50"/></svg></button><span class="sep"></span>${['lett','page','rich','sys','calc','pic','shp','lin','bar','mat','hnd','cht','xbx'].map(tb).join('')}</div>`+
`<div class="strip roomy"><span class="grip"></span>${['lett','page','rich','calc','pic','bar','mat','hnd','cht','xbx'].map(db).join('')}</div>`+
`<div class="strip wide"><span class="grip"></span>
<button class="tb" aria-label="Dialog"><svg width="14" height="14" viewBox="0 0 14 14"><path d="M1 0h12v14H1z" fill="#fff"/><path d="M2.500 1.500h3v2h-3zM2.500 5.500h3v2h-3zM2.500 10.500h3v2h-3z" fill="#fff" stroke="#445"/><path d="M8 1.500h4M8 3.500h4M8 6.500h4M8 10.500h4M8 12.500h4" stroke="#445"/></svg></button>${tb('rep')}
<button class="tb" aria-label="Seite"><svg width="13" height="14" viewBox="0 0 13 14"><path d="M1.500.500h7l3 3v10h-10z" fill="#fff" stroke="#8790a8"/><path d="M2 8l1.500-2L5 8l1.500-2L8 8l1.500-2L11 8" fill="none" stroke="#222"/></svg></button>
<button class="tb" aria-label="Format"><svg width="16" height="16" viewBox="0 0 16 16"><path d="M1 15l6-8 2 2-7 6z" fill="#8f9ab8"/><path d="M6 4l4-3 5 1-1 4-4 4z" fill="#5b4038" stroke="#3a2a28"/><path d="M5 5l5 5" stroke="#caa" stroke-width="2"/></svg></button></div>`;
// report objects
const L2=['Hauptschriftart','AbschlagGeeignet','ArtikeltextArt','RichtextDurchsichtig','EPorto_moeglich','Sortierfeld'];
const ch=`<i>${ic('cD',11)}</i>`;
$('tree2').innerHTML=
`<div class="row-t">${ch}<span class="pick-b d-flex"><span class="ic">${ic('rep',16)}</span><span class="pe-1">Report</span></span></div>
<div class="row-t"><i></i>${ch}<span class="ic">${ic('prms',16)}</span>Parameters</div>`+
L2.map((t,k)=>`<div class="row-t"><i></i><i class="v"></i><i class="${k==5?'l':'t'}"></i><span class="ic">${ic('prm',14)}</span>${t}</div>`).join('')+
`<div class="row-t"><i></i>${ch}<span class="ic">${ic('bnd')}</span>Titel</div>
<div class="row-t"><i></i><i class="v"></i><i class="t"></i><span class="ic">${ic('lett',14)}</span>LabelVorgangsartTitel</div>`;
// property grid: group | name, value, expandable
const P=['Data',['DataPipeline','AVX'],['NoDataBehaviors','[ndBlankReport]',1],'Generation',['AutoStop',null],['BackgroundPrintSettings','(TppBackgroundPrintSettings)',1],['CachePages',null],['DefaultFileDeviceType',''],['DeviceType','Screen'],['PageLimit','0'],['PassSetting','psTwoPass'],'Layout',['ColumnPositions','(TStringList)'],['Columns','1'],['ColumnWidth','0'],['PrinterSetup','(TppPrinterSetup)',1],['SavePrinterSetup',null],['Units','utMillimeters']];
$('props').innerHTML=P.map(r=>typeof r=='string'
?`<tr class="grp"><th colspan="3"><div class="cellx"><span class="pm"></span>${r}</div></th></tr>`
:`<tr><td class="gut"></td><th><div class="cellx"><span class="${r[2]?'pm plus':'nopm'}"></span><span${r[1]===null?` id="p${r[0]}"`:''}>${r[0]}</span></div></th><td>${r[1]===null?`<input type="checkbox" aria-labelledby="p${r[0]}">`:r[1]}</td></tr>`).join('');
// field list
const F=[['RecId','Integer'],['M_ID','Integer'],['M_DATE','DateTime'],['M_ADDRESSCOMP...','Memo'],['M_DELADDRESSC...','Memo']];
'M_ADDRESS M_TITLE M_NAME1 M_NAME2 M_NAME3 M_STREET M_COUNTRYC M_COUNTRY M_ZIPCODE M_CITY M_CUSTNO M_OWNCUSTNO M_PHONE1 M_PHONE2 M_FAX M_MOBILE M_EMAIL M_CONTACT_ADD... M_CONTACT_TITLE M_CONTACT_NAME1 M_CONTACT_NAME2 M_CONTACT_PHO... M_CONTACT_PHO... M_CONTACT_FAX'.split(' ').forEach(n=>F.push([n,'String']));
$('fields').innerHTML=F.map(([n,t],k)=>`<tr><td><div class="fname${k?'':' pick-a'}">${ic('fld')}${n}</div></td><td>${t}</td></tr>`).join('');
// rulers: 37.8 px for each 10 mm, a short mark every quarter
const step=37.8;
let h='';
for(let q=0;q<90;q++){const x=Math.round(q*step/4);
 if(q%4==0){const k=q/4; if(k)h+=`<path d="M${x+.5} 0v14" stroke="#000"/>`; if(k<21)h+=`<text x="${x+2}" y="12">${k*10}</text>`}
 else h+=`<path d="M${x+.5} 0v3" stroke="#000"/>`}
$('hr').innerHTML=`<svg width="100%" height="14">${h}</svg>`;
document.querySelectorAll('.vrule').forEach(el=>{let s='';const len=+el.dataset.len;
 for(let q=0;q*step/4<len;q++){const y=Math.round(q*step/4);
  if(q%4==0){if(q)s+=`<path d="M0 ${y+.5}h13" stroke="#000"/>`;String(q/4*10).split('').forEach((c,j)=>s+=`<text x="6" y="${y+10+j*8}">${c}</text>`)}
  else s+=`<path d="M0 ${y+.5}h3" stroke="#000"/>`}
 el.innerHTML=`<svg width="13" height="${len}">${s}</svg>`});
</script>
</body>
</html>
